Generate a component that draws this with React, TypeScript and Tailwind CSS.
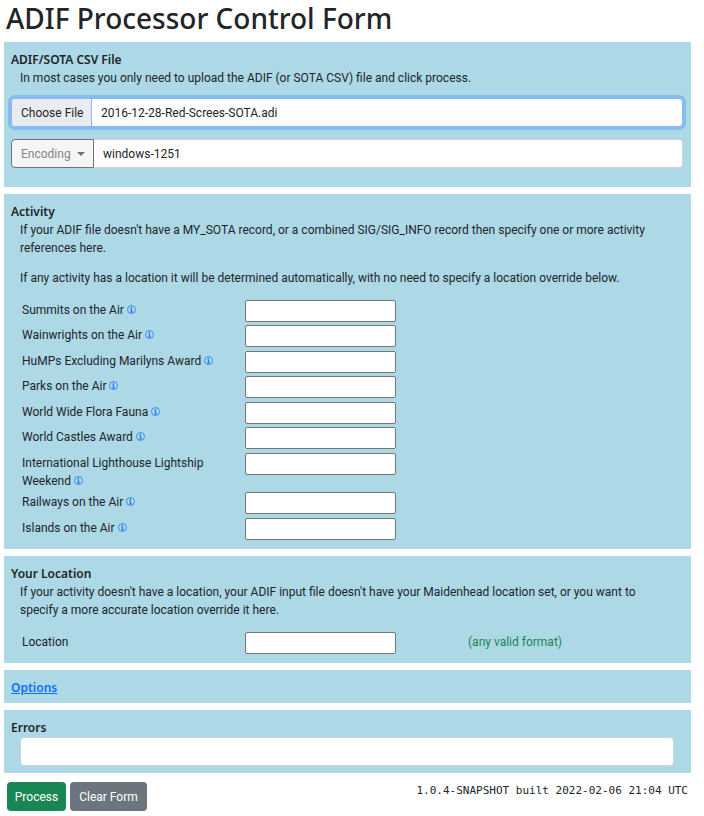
import { useState, type ReactNode } from 'react';

const heading = "font-['Noto_Sans',sans-serif]";

const activities = [
  'Summits on the Air',
  'Wainwrights on the Air',
  'HuMPs Excluding Marilyns Award',
  'Parks on the Air',
  'World Wide Flora Fauna',
  'World Castles Award',
  'International Lighthouse Lightship Weekend',
  'Railways on the Air',
  'Islands on the Air',
];

function Panel({ title, children }: { title: ReactNode; children?: ReactNode }) {
  return (
    <section className="bg-[#add8e6] pt-[9px] pb-1.5 pl-[7px]">
      <h2 className={`${heading} font-semibold`}>{title}</h2>
      {children}
    </section>
  );
}

function Info({ about }: { about: string }) {
  return (
    <a href="#info" aria-label={`About ${about}`} className="inline-block text-[#0d6efd]">
      <svg viewBox="0 0 9 9" className="inline-block size-[9px] align-baseline" fill="none" stroke="currentColor" aria-hidden="true">
        <circle cx="4.5" cy="4.5" r="4" strokeWidth="0.7" />
        <path d="M3.3 3.8H4.6V7M3.2 7H5.9" strokeWidth="1" />
        <path d="M4.5 1.6V2.8" strokeWidth="1.2" />
      </svg>
    </a>
  );
}

function Field({ label, info, hint }: { label: string; info?: boolean; hint?: string }) {
  const id = label.toLowerCase().replace(/ /g, '-');
  return (
    <div className="grid grid-cols-3 items-start odd:min-h-[25px] even:min-h-[26px]">
      <div className="pt-px pr-4 pb-0.5">
        <label htmlFor={id}>{label}</label>
        {info && <> <Info about={label} /></>}
      </div>
      <input
        id={id}
        type="text"
        className="h-[22px] w-[151px] rounded-[2px] border border-[#767676] bg-white px-1 outline-none"
      />
      {hint && <span className="pt-px text-[#198754]">{hint}</span>}
    </div>
  );
}

export default function App() {
  const [fileName, setFileName] = useState('2016-12-28-Red-Screes-SOTA.adi');
  return (
    <main className="bg-white pr-[13px] pb-1 pl-1 font-['Roboto',sans-serif] text-[12px] leading-[18px] text-[#212529]">
      <h1 className={`${heading} pt-px pb-[7px] pl-0.5 text-[28px] leading-[34px] font-medium`}>ADIF Processor Control Form</h1>

      <form className="flex flex-col gap-[7px]" onSubmit={(e) => e.preventDefault()}>
        <Panel title="ADIF/SOTA CSV File">
          <p className="pr-4 pl-[9px]">
            In most cases you only need to upload the ADIF (or SOTA CSV) file and click process.
          </p>
          <div className="mt-[11px] mr-2 mb-[13px] flex flex-col gap-3">
            <label className="flex h-[29px] items-stretch overflow-hidden rounded-[4px] border border-[#86b7fe] bg-white ring-3 ring-[#0d6efd]/25">
              <input
                type="file"
                className="sr-only"
                onChange={(e) => setFileName(e.target.files?.[0]?.name ?? fileName)}
              />
              <span className="flex w-20 items-center border-r border-[#86b7fe] bg-[#e9ecef] pl-[9px]">Choose File</span>
              <span className="flex items-center pl-[9px]">{fileName}</span>
            </label>
            <div className="flex h-[29px]">
              <button
                type="button"
                className="flex w-[83px] items-center gap-1.5 rounded-l-[4px] border border-[#6c757d] bg-[#f5f5f5] pl-[9px] text-[#7f868d]"
              >
                Encoding
                <span className="border-x-4 border-t-4 border-x-transparent border-t-[#6c757d]" />
              </button>
              <input
                type="text"
                aria-label="Encoding"
                defaultValue="windows-1251"
                className="min-w-0 flex-1 rounded-r-[4px] border border-l-0 border-[#ced4da] bg-white px-[9px] outline-none"
              />
            </div>
          </div>
        </Panel>

        <Panel title="Activity">
          <div className="flex flex-col gap-3 pr-4 pl-[9px]">
            <p>
              If your ADIF file doesn't have a MY_SOTA record, or a combined SIG/SIG_INFO record then specify one or more
              activity references here.
            </p>
            <p>
              If any activity has a location it will be determined automatically, with no need to specify a location
              override below.
            </p>
          </div>
          <div className="mt-[13px] ml-[11px]">
            {activities.map((name) => (
              <Field key={name} label={name} info />
            ))}
          </div>
        </Panel>

        <Panel title="Your Location">
          <p className="pr-4 pl-[9px]">
            If your activity doesn't have a location, your ADIF input file doesn't have your Maidenhead location set, or
            you want to specify a more accurate location override it here.
          </p>
          <div className="mt-[13px] ml-[11px]">
            <Field label="Location" hint="(any valid format)" />
          </div>
        </Panel>

        <Panel
          title={
            <a href="#options" className="text-[#0d6efd] underline">
              Options
            </a>
          }
        />

        <Panel title={<label htmlFor="errors">Errors</label>}>
          <textarea
            id="errors"
            readOnly
            rows={1}
            className="mb-px ml-[9px] block h-[29px] w-[calc(100%-26px)] resize-none rounded-[4px] border border-[#ced4da] bg-white px-[9px] py-1 outline-none"
          />
        </Panel>

        <div className="mt-0.5 flex items-start gap-1 pr-[3px] pl-[3px] text-white">
          <button type="submit" className="h-[29px] w-[59px] rounded-[4px] bg-[#198754]">
            Process
          </button>
          <button type="reset" className="h-[29px] w-[77px] rounded-[4px] bg-[#6c757d]">
            Clear Form
          </button>
          <span className="ml-auto font-['DejaVu_Sans_Mono',monospace] text-[11px] text-[#212529]">
            1.0.4-SNAPSHOT built 2022-02-06 21:04 UTC
          </span>
        </div>
      </form>
    </main>
  );
}
